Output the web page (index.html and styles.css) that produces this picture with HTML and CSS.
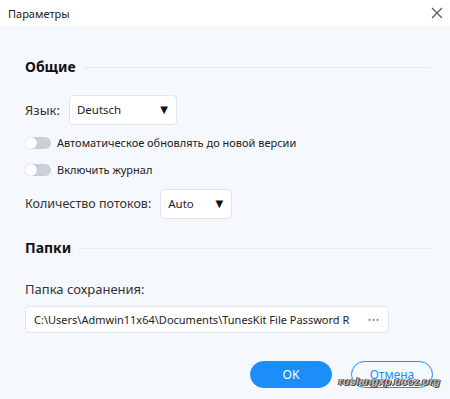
FILE: index.html
```html
<!DOCTYPE html>
<html lang="ru">
<head>
  <title>Параметры</title>
  <meta charset="utf-8">
  <link rel="stylesheet" href="styles.css">
</head>
<body>
  <div class="dialog">
    <header class="titlebar">
      <span class="title">Параметры</span>
      <svg class="close" width="12" height="12" viewBox="0 0 12 12">
        <path d="M1 1L11 11M11 1L1 11" stroke="#555" stroke-width="1.2" fill="none"/>
      </svg>
    </header>
    <main class="content">
      <h2 class="section">Общие</h2>
      <div class="row">
        <span class="label">Язык:</span>
        <div class="select select-lang">Deutsch<span class="arrow">▼</span></div>
      </div>
      <div class="toggle-row first">
        <span class="toggle"></span>
        <span>Автоматическое обновлять до новой версии</span>
      </div>
      <div class="toggle-row">
        <span class="toggle"></span>
        <span>Включить журнал</span>
      </div>
      <div class="row row-threads">
        <span class="label">Количество потоков:</span>
        <div class="select select-threads">Auto<span class="arrow">▼</span></div>
      </div>
      <h2 class="section section-folders">Папки</h2>
      <p class="folder-label">Папка сохранения:</p>
      <div class="path">
        <span class="path-text">C:\Users\Admwin11x64\Documents\TunesKit File Password R</span>
        <span class="dots">•••</span>
      </div>
      <div class="buttons">
        <button class="btn btn-ok">OK</button>
        <button class="btn btn-cancel">Отмена</button>
      </div>
    </main>
    <div class="watermark">ruslangxp.ucoz.org</div>
  </div>
</body>
</html>
```

FILE: styles.css
```css
*, *::before, *::after {
  margin: 0;
  padding: 0;
  box-sizing: border-box;
}

body {
  width: 450px;
  height: 399px;
  overflow: hidden;
  background-color: #F5F8FD;
  color: #333333;
  font-family: "Noto Sans", sans-serif;
  font-size: 12px;
}

.dialog {
  position: relative;
  height: 399px;
}

.titlebar {
  display: flex;
  align-items: center;
  justify-content: space-between;
  height: 26px;
  padding: 0 7px 0 8px;
  background-color: #FFFFFF;
}

.title {
  font-size: 11px;
  color: #222222;
}

.close {
  display: block;
}

.content {
  padding: 0 20px 0 25px;
}

.section {
  display: flex;
  align-items: center;
  gap: 8px;
  margin-top: 33px;
  font-size: 14px;
  font-weight: bold;
  color: #111111;
  line-height: 16px;
}

.section::after {
  content: "";
  flex: 1;
  height: 1px;
  background-color: #E6EAF0;
}

.row {
  display: flex;
  align-items: center;
  gap: 9px;
  margin-top: 20px;
  font-size: 13px;
  line-height: 16px;
}

.select {
  display: flex;
  align-items: center;
  justify-content: space-between;
  height: 30px;
  padding: 0 8px 0 7px;
  background-color: #FFFFFF;
  border: 1px solid #E3E6EB;
  border-radius: 4px;
  font-size: 11.5px;
  color: #222222;
}

.select-lang {
  width: 108px;
}

.select-threads {
  width: 72px;
}

.arrow {
  font-family: "DejaVu Sans", sans-serif;
  font-size: 10px;
  color: #111111;
}

.toggle-row {
  display: flex;
  align-items: center;
  gap: 6px;
  margin-top: 13px;
  font-size: 11px;
  line-height: 14px;
  color: #222222;
}

.toggle-row.first {
  margin-top: 11px;
}

.toggle {
  position: relative;
  width: 26px;
  height: 12px;
  border-radius: 6px;
  background-color: #C9D0D9;
}

.toggle::before {
  content: "";
  position: absolute;
  left: 0;
  top: 0;
  width: 12px;
  height: 12px;
  border-radius: 50%;
  background-color: #FFFFFF;
  box-shadow: 0 0 1px rgba(0, 0, 0, 0.2);
}

.row-threads {
  margin-top: 12px;
}

.row-threads .label {
  font-size: 12.5px;
}

.section-folders {
  margin-top: 21px;
}

.folder-label {
  margin-top: 25px;
  font-size: 13px;
  line-height: 16px;
}

.path {
  display: flex;
  align-items: center;
  justify-content: space-between;
  width: 364px;
  height: 27px;
  margin-top: 9px;
  padding: 0 8px;
  background-color: #FFFFFF;
  border: 1px solid #E3E6EB;
  border-radius: 4px;
  font-size: 11px;
  color: #222222;
}

.path-text {
  overflow: hidden;
  white-space: nowrap;
  width: 320px;
}

.dots {
  font-size: 8px;
  letter-spacing: 1px;
  color: #888888;
}

.buttons {
  display: flex;
  justify-content: flex-end;
  gap: 19px;
  margin-top: 28px;
  margin-right: -3px;
}

.btn {
  width: 82px;
  height: 27px;
  border-radius: 14px;
  font-family: inherit;
  font-size: 12px;
}

.btn-ok {
  background-color: #1C8EF9;
  border: 1px solid #1C8EF9;
  color: #FFFFFF;
}

.btn-cancel {
  background-color: #F5F8FD;
  border: 1px solid #1C8EF9;
  color: #1C8EF9;
}

.watermark {
  position: absolute;
  right: 10px;
  top: 375px;
  font-family: "Liberation Sans", sans-serif;
  font-style: italic;
  font-weight: bold;
  font-size: 11px;
  color: #B8B8B8;
  text-shadow: 1px 1px 0 #444444, -1px 0 0 #444444;
}
```
